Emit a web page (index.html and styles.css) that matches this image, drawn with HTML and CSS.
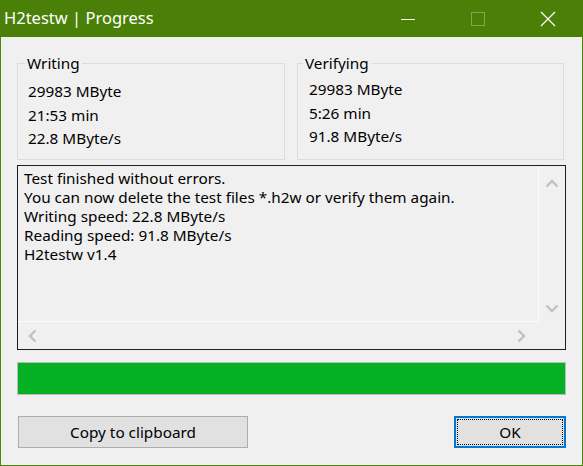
FILE: index.html
```html
<!DOCTYPE html>
<html lang="en">
<head>
    <meta charset="UTF-8">
    <title>H2testw | Progress</title>
    <link rel="stylesheet" href="styles.css">
</head>
<body>

<div class="window">
    <div class="titlebar">
        <span class="title">H2testw | Progress</span>
        <div class="caption-buttons">
            <span class="cap">
                <svg width="16" height="16" viewBox="0 0 16 16"><path d="M1 8.5h14" stroke="#fff" stroke-width="1"/></svg>
            </span>
            <span class="cap disabled">
                <svg width="16" height="16" viewBox="0 0 16 16"><rect x="1.5" y="1.5" width="13" height="13" fill="none" stroke="#fff" stroke-width="1"/></svg>
            </span>
            <span class="cap">
                <svg width="16" height="16" viewBox="0 0 16 16"><path d="M1 1l14 14M15 1L1 15" stroke="#fff" stroke-width="1.2"/></svg>
            </span>
        </div>
    </div>

    <div class="client">
        <div class="groups">
            <fieldset class="group writing">
                <legend>Writing</legend>
                <div class="value">29983 MByte</div>
                <div class="value">21:53 min</div>
                <div class="value">22.8 MByte/s</div>
            </fieldset>
            <fieldset class="group verifying">
                <legend>Verifying</legend>
                <div class="value">29983 MByte</div>
                <div class="value">5:26 min</div>
                <div class="value">91.8 MByte/s</div>
            </fieldset>
        </div>

        <div class="log">
            <div class="log-text">
                <div>Test finished without errors.</div>
                <div>You can now delete the test files *.h2w or verify them again.</div>
                <div>Writing speed: 22.8 MByte/s</div>
                <div>Reading speed: 91.8 MByte/s</div>
                <div>H2testw v1.4</div>
            </div>
            <div class="vscroll">
                <svg width="14" height="10" viewBox="0 0 14 10"><path d="M1.5 8.5L7 3l5.5 5.5" fill="none" stroke="#c0c0c0" stroke-width="2.4"/></svg>
                <svg width="14" height="10" viewBox="0 0 14 10"><path d="M1.5 1.5L7 7l5.5-5.5" fill="none" stroke="#c0c0c0" stroke-width="2.4"/></svg>
            </div>
            <div class="hscroll">
                <svg width="10" height="14" viewBox="0 0 10 14"><path d="M8.5 1.5L3 7l5.5 5.5" fill="none" stroke="#c0c0c0" stroke-width="2.4"/></svg>
                <svg width="10" height="14" viewBox="0 0 10 14"><path d="M1.5 1.5L7 7l-5.5 5.5" fill="none" stroke="#c0c0c0" stroke-width="2.4"/></svg>
            </div>
            <div class="corner"></div>
        </div>

        <div class="progress">
            <div class="progress-fill" style="width: 100%;"></div>
        </div>

        <div class="buttons">
            <button class="btn copy">Copy to clipboard</button>
            <button class="btn ok"><span class="focus">OK</span></button>
        </div>
    </div>
</div>

</body>
</html>
```

FILE: styles.css
```css
/* Reset */
* {
    margin: 0;
    padding: 0;
    box-sizing: border-box;
}

body {
    font-family: 'Noto Sans', 'Open Sans', sans-serif;
    font-size: 15.3px;
    color: #000;
    background: #f0f0f0;
}

/* Window frame */
.window {
    width: 583px;
    height: 466px;
    border: 1px solid #4f840d;
    border-top: none;
    background: #f0f0f0;
}

.titlebar {
    height: 37px;
    margin: 0 -1px;
    background: #4a8008;
    display: flex;
    align-items: center;
    justify-content: space-between;
}

.title {
    color: #fff;
    font-size: 16.5px;
    padding-left: 4px;
    padding-bottom: 2px;
}

.caption-buttons {
    display: flex;
    height: 100%;
}

.cap {
    width: 70px;
    display: flex;
    align-items: center;
    justify-content: center;
}

.cap.disabled svg {
    opacity: 0.3;
}

/* Client area */
.client {
    padding: 0 16px;
}

/* Group boxes */
.groups {
    display: grid;
    grid-template-columns: 268px 267px;
    column-gap: 12px;
    margin-top: 16px;
}

.group {
    border: 1px solid #dcdcdc;
    min-width: 0;
    padding: 7px 0 8px 7px;
    height: 107px;
}

.group legend {
    padding: 0 2px;
    line-height: 20px;
}

.value {
    line-height: 23.5px;
    padding-left: 3px;
}

.verifying {
    padding-top: 5px;
    padding-left: 5px;
}

.verifying .value {
    padding-left: 6px;
}

/* Log box */
.log {
    margin-top: 5px;
    width: 549px;
    height: 185px;
    border: 1px solid #1e1e1e;
    display: grid;
    grid-template-columns: 1fr 26px;
    grid-template-rows: 1fr 27px;
}

.log-text {
    padding: 3px 0 0 6px;
    line-height: 19px;
    border-right: 1px solid #fbfbfb;
    border-bottom: 1px solid #fbfbfb;
    white-space: nowrap;
    overflow: hidden;
}

.vscroll {
    display: flex;
    flex-direction: column;
    justify-content: space-between;
    align-items: center;
    padding: 12px 0 8px;
}

.hscroll {
    display: flex;
    justify-content: space-between;
    align-items: center;
    padding: 0 12px 0 9px;
}

/* Progress bar */
.progress {
    margin-top: 12px;
    width: 549px;
    height: 33px;
    border: 1px solid #bcbcbc;
    background: #e6e6e6;
}

.progress-fill {
    height: 100%;
    background: #06b025;
}

/* Buttons */
.buttons {
    display: flex;
    justify-content: space-between;
    margin-top: 21px;
}

.btn {
    height: 32px;
    font-family: 'Noto Sans', 'Open Sans', sans-serif;
    font-size: 15.3px;
    background: #e1e1e1;
    border: 1px solid #adadad;
    color: #000;
}

.copy {
    width: 230px;
    margin-left: 1px;
}

.ok {
    width: 112px;
    border: 2px solid #0078d7;
    padding: 1px;
}

.ok .focus {
    display: flex;
    align-items: center;
    justify-content: center;
    height: 100%;
    border: 1px dotted #000;
}
```
